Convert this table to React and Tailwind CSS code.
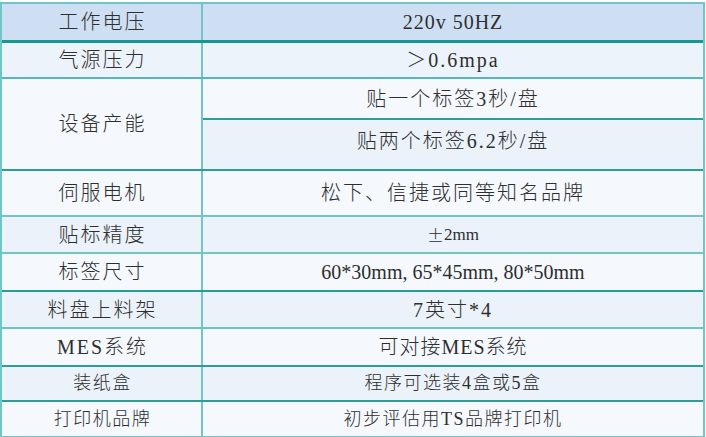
import React from "react";

// 参数表：左列名称、右列数值
const rows = [
  { label: "气源压力", value: "＞0.6mpa", h: "h-[36px]", bg: "bg-[#edf3fb]", line: "border-[#55b8b6]" },
  { label: "设备产能", sub: ["贴一个标签3秒/盘", "贴两个标签6.2秒/盘"], h: "h-[92px]", bg: "bg-[#f5f9fe]", line: "border-[#2a9f98]" },
  { label: "伺服电机", value: "松下、信捷或同等知名品牌", h: "h-[46px]", bg: "bg-[#f5f9fe]", line: "border-[#72c6c6]" },
  { label: "贴标精度", pm: true, h: "h-[37px]", bg: "bg-[#ebf2fa]", line: "border-[#72c6c6]" },
  { label: "标签尺寸", value: "60*30mm, 65*45mm, 80*50mm", h: "h-[38px]", bg: "bg-[#f5f9fe]", line: "border-[#23a096]", latin: true },
  { label: "料盘上料架", value: "7英寸*4", h: "h-[37px]", bg: "bg-[#ebf2fa]", line: "border-[#6cc3c3]" },
  { label: "MES系统", value: "可对接MES系统", h: "h-[38px]", bg: "bg-[#f5f9fe]", line: "border-[#2a9f98]", tight: true },
  { label: "装纸盒", value: "程序可选装4盒或5盒", h: "h-[35px]", bg: "bg-[#ebf2fa]", line: "border-[#2a9f98]", sm: true },
  { label: "打印机品牌", value: "初步评估用TS品牌打印机", h: "h-[34px]", bg: "bg-[#f5f9fe]", line: "", sm: true, last: true },
];

const font = "font-['Liberation_Serif','Noto_Sans_CJK_SC',serif]";

export default function App() {
  return (
    <div className={`w-[706px] h-[437px] bg-white pt-[2px] text-[#2e2e2e] font-light ${font}`}>
      <div className="w-[705px] border-2 border-[#70c6c6]">
        {/* 表头 */}
        <div className="flex h-[39px] bg-[#cfdff3] border-b-[3px] border-[#109a93]">
          <div className="w-[201px] border-r-2 border-[#70c6c6] flex items-center justify-center text-[20px] tracking-[2px] pl-[2px]">
            工作电压
          </div>
          <div className="flex-1 flex items-center justify-center text-[20px] tracking-[1px]">
            220v 50HZ
          </div>
        </div>

        {rows.map((r) => (
          <div key={r.label} className={`flex ${r.h} ${r.bg} ${r.last ? "" : "border-b-2 " + r.line}`}>
            <div
              className={`w-[201px] shrink-0 border-r-2 border-[#70c6c6] flex items-center justify-center pl-[2px] ${
                r.sm ? "text-[18px] tracking-[1.5px]" : "text-[20px] tracking-[2px]"
              }`}
            >
              {r.label}
            </div>
            {r.sub ? (
              <div className="flex-1 flex flex-col">
                <div className="h-[41px] border-b-2 border-[#2a9f98] flex items-center justify-center text-[20px] tracking-[2px]">
                  {r.sub[0]}
                </div>
                <div className="flex-1 bg-[#ebf2fa] flex items-center justify-center text-[20px] tracking-[2px] pb-[8px]">
                  {r.sub[1]}
                </div>
              </div>
            ) : r.pm ? (
              <div className="flex-1 flex items-center justify-center text-[17px]">
                <span className="font-['Noto_Sans_CJK_SC',sans-serif] text-[17px]">±</span>
                <span>2mm</span>
              </div>
            ) : (
              <div
                className={`flex-1 flex items-center justify-center ${
                  r.latin
                    ? "text-[20px]"
                    : r.sm
                    ? "text-[18px] tracking-[1.5px]"
                    : r.tight
                    ? "text-[20px] tracking-[1px]"
                    : "text-[20px] tracking-[2px]"
                }`}
              >
                {r.value}
              </div>
            )}
          </div>
        ))}
      </div>
    </div>
  );
}
